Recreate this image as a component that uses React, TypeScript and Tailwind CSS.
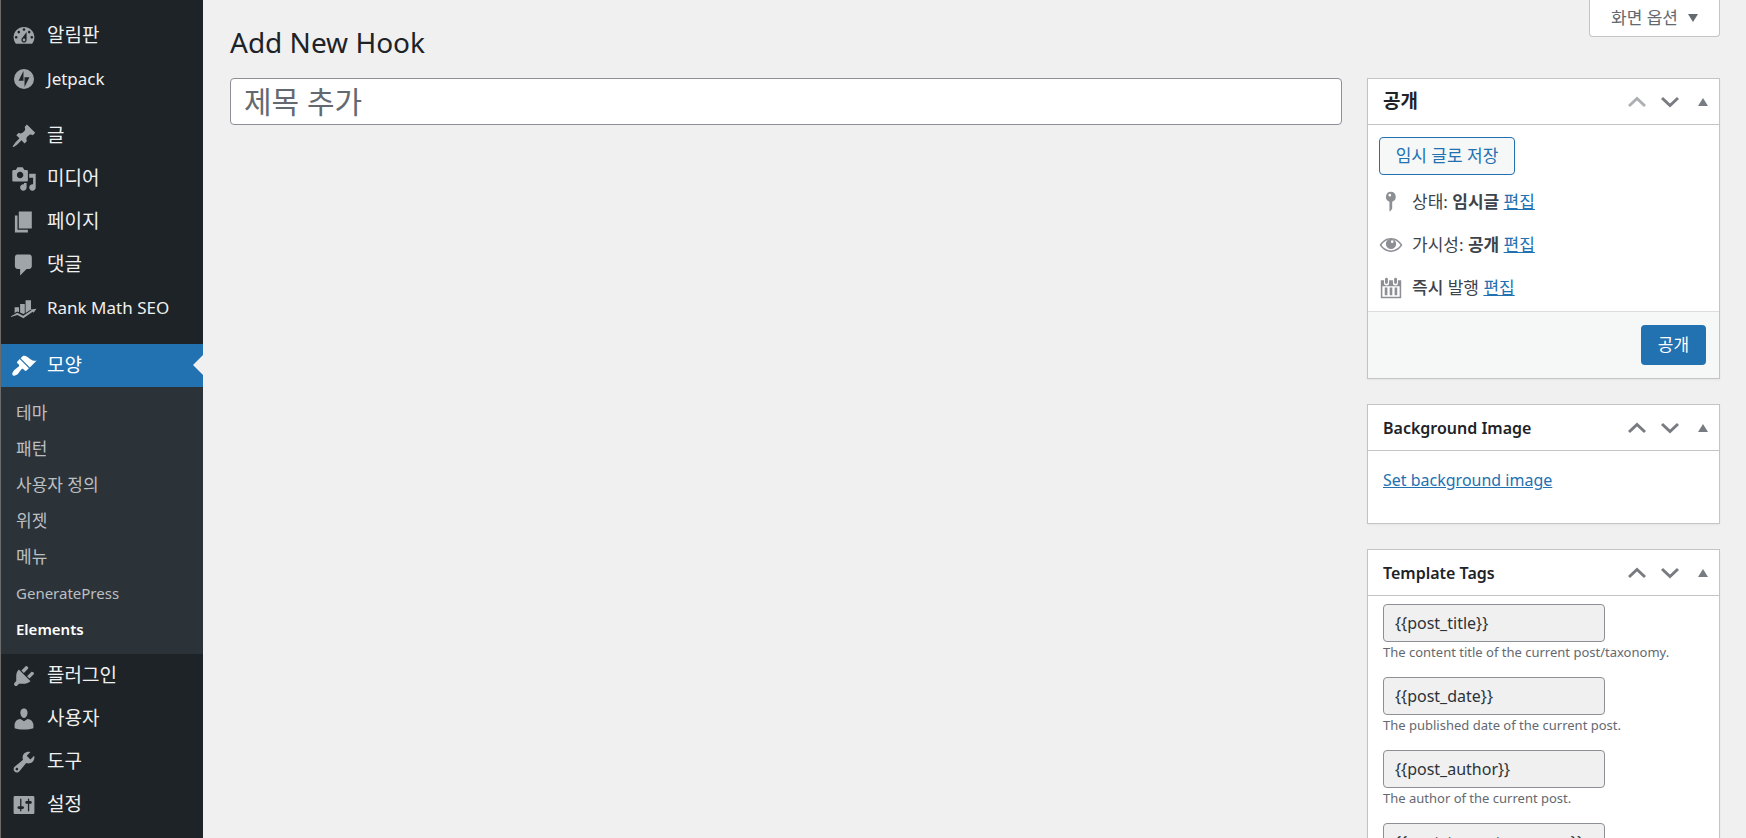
import { useState } from "react";
import type { ReactNode } from "react";
import clsx from "clsx";

const icons: Record<string, ReactNode> = {
    dashboard: <path fillRule="evenodd" d="M3.76 16h12.48c1.1-1.37 1.76-3.11 1.76-5 0-4.42-3.58-8-8-8s-8 3.58-8 8c0 1.89.66 3.63 1.76 5zM10 4c.55 0 1 .45 1 1s-.45 1-1 1-1-.45-1-1 .45-1 1-1zM6 6c.55 0 1 .45 1 1s-.45 1-1 1-1-.45-1-1 .45-1 1-1zm8 0c.55 0 1 .45 1 1s-.45 1-1 1-1-.45-1-1 .45-1 1-1zm-5.37 5.55L12 7v6c0 1.1-.9 2-2 2s-2-.9-2-2c0-.57.24-1.08.63-1.45zM4 10c.55 0 1 .45 1 1s-.45 1-1 1-1-.45-1-1 .45-1 1-1zm12 0c.55 0 1 .45 1 1s-.45 1-1 1-1-.45-1-1 .45-1 1-1zm-5 3c0-.55-.45-1-1-1s-1 .45-1 1 .45 1 1 1 1-.45 1-1z" />,
    jetpack: <path fillRule="evenodd" d="M10 2.3a7.7 7.7 0 1 0 0 15.4 7.7 7.7 0 0 0 0-15.4zM9.6 11.3H5.8l3.8-7.4v7.4zm.8 4.8V8.7h3.8l-3.8 7.4z" />,
    post: <path d="M10.44 3.02l1.82-1.82 6.36 6.35-1.83 1.82c-1.05-.68-2.48-.57-3.41.36l-.75.75c-.92.93-1.04 2.35-.35 3.41l-1.83 1.82-2.41-2.41-2.8 2.79c-.42.42-3.38 2.71-3.8 2.29s1.86-3.39 2.28-3.81l2.79-2.79L4.1 9.36l1.83-1.82c1.05.69 2.48.57 3.4-.36l.75-.75c.93-.92 1.05-2.35.36-3.41z" />,
    media: <path fillRule="evenodd" d="M13 11V4c0-.55-.45-1-1-1h-1.67L9 1H5L3.67 3H2c-.55 0-1 .45-1 1v7c0 .55.45 1 1 1h10c.55 0 1-.45 1-1zM7 4.5c1.38 0 2.5 1.12 2.5 2.5S8.38 9.5 7 9.5 4.5 8.38 4.5 7 5.62 4.5 7 4.5zM14 6h5v10.5c0 1.38-1.12 2.5-2.5 2.5S14 17.88 14 16.5s1.12-2.5 2.5-2.5c.17 0 .34.02.5.05V9h-3V6zm-4 8.05V13h2v3.5c0 1.38-1.12 2.5-2.5 2.5S7 17.88 7 16.5 8.12 14 9.5 14c.17 0 .34.02.5.05z" />,
    page: <path d="M6 15V2h10v13H6zm-1 1h8v2H3V5h2v11z" />,
    comments: <path d="M5 2h9c1.1 0 2 .9 2 2v7c0 1.1-.9 2-2 2h-2l-5 5v-5H5c-1.1 0-2-.9-2-2V4c0-1.1.9-2 2-2z" />,
    rankmath: (
        <>
            <path d="M2.8 9.5h3.4v3.8l-1.4-.6-2 1.100zM7 7h3.600v7l-1.100.6L7 13.400zM11.200 4h4.200v7.200l-4.200 2.600z" />
            <path d="M0 16.300l4.800-2.600 4.600 2.300 6.300-4.200-.8-.7 4.700-.6-2.200 3.200-.7-.9-7.200 5-4.600-2.500L0 16.900z" />
        </>
    ),
    appearance: <path d="M14.48 11.06L7.41 3.99l1.5-1.5c.5-.56 2.3-.47 3.51.32 1.21.8 1.43 1.28 2.91 2.1 1.18.64 2.45 1.26 4.45.85zm-.71.71L6.7 4.7 4.93 6.47c-.39.39-.39 1.02 0 1.41l1.06 1.06c.39.39.39 1.03 0 1.42-.6.6-1.43 1.11-2.21 1.69-.35.26-.7.53-1.01.84C1.43 14.23.4 16.08 1.4 17.07c.99 1 2.84-.03 4.18-1.36.31-.31.58-.66.85-1.02.57-.78 1.08-1.61 1.69-2.21.39-.39 1.02-.39 1.41 0l1.06 1.06c.39.39 1.02.39 1.41 0z" />,
    plugins: <path d="M13.11 4.36L9.87 7.6 8 5.73l3.24-3.24c.35-.34 1.05-.2 1.56.32.52.51.66 1.21.31 1.55zm-8 1.77l.91-1.12 9.01 9.01-1.19.84c-.71.71-2.63 1.16-3.82 1.16H6.14L4.9 17.26c-.59.59-1.54.59-2.12 0-.59-.58-.59-1.53 0-2.12l1.24-1.24v-3.88c0-1.13.4-3.19 1.09-3.89zm7.26 3.97l3.24-3.24c.34-.35 1.04-.21 1.55.31.52.51.66 1.21.31 1.55l-3.24 3.25z" />,
    users: <path d="M10 9.25c-2.27 0-2.73-3.44-2.73-3.44C7 4.02 7.82 2 9.97 2c2.16 0 2.98 2.02 2.71 3.81 0 0-.41 3.44-2.68 3.44zm0 2.57L12.72 10c2.39 0 4.52 2.33 4.52 4.53v2.49s-3.65 1.13-7.24 1.13c-3.65 0-7.24-1.13-7.24-1.13v-2.49c0-2.25 1.94-4.48 4.47-4.48z" />,
    tools: <path fillRule="evenodd" d="M16.68 9.77c-1.34 1.34-3.3 1.67-4.95.99l-5.41 6.52c-.99.99-2.59.99-3.58 0s-.99-2.59 0-3.57l6.52-5.42c-.68-1.65-.35-3.61.99-4.95 1.28-1.28 3.12-1.62 4.72-1.06l-2.89 2.89 2.82 2.82 2.86-2.87c.53 1.58.18 3.39-1.08 4.65zM3.81 16.21c.4.39 1.04.39 1.43 0 .4-.4.4-1.04 0-1.43-.39-.4-1.03-.4-1.43 0-.39.39-.39 1.03 0 1.43z" />,
    settings: <path fillRule="evenodd" d="M18 16V4c0-.55-.45-1-1-1H3c-.55 0-1 .45-1 1v12c0 .55.45 1 1 1h14c.55 0 1-.45 1-1zM8 11h1c.55 0 1 .45 1 1s-.45 1-1 1H8v1.500c0 .28-.22.5-.5.5s-.5-.22-.5-.5V13H6c-.55 0-1-.45-1-1s.45-1 1-1h1V5.500c0-.28.22-.5.5-.5s.5.22.5.5V11zm5-2h-1c-.55 0-1-.45-1-1s.45-1 1-1h1V5.500c0-.28.22-.5.5-.5s.5.22.5.5V7h1c.55 0 1 .45 1 1s-.45 1-1 1h-1v5.500c0 .28-.22.5-.5.5s-.5-.22-.5-.5V9z" />,
    key: <path fillRule="evenodd" d="M10 1.500a4.200 4.200 0 0 0-1.300 8.200V18l1.300-.9 1-1.600V9.700A4.200 4.200 0 0 0 10 1.500zM9 3.200a1.100 1.100 0 1 1 0 2.200 1.100 1.100 0 0 1 0-2.200z" />,
    visibility: (
        <>
            <path fillRule="evenodd" d="M10 4.200C5.800 4.200 2.700 6.500.5 10.100c2.200 3.500 5.300 5.700 9.500 5.700s7.300-2.200 9.500-5.700C17.300 6.500 14.200 4.200 10 4.200zm0 1.300c3.400 0 6.100 1.700 8 4.600-1.900 2.700-4.600 4.400-8 4.400s-6.100-1.700-8-4.400c1.900-2.900 4.600-4.600 8-4.600z" />
            <path fillRule="evenodd" d="M10 4.800a4.300 4.300 0 1 0 0 8.600 4.300 4.300 0 0 0 0-8.600zm1 1.300a1.100 1.100 0 1 1 0 2.200 1.100 1.100 0 0 1 0-2.200z" />
        </>
    ),
    calendar: (
        <>
            <path fillRule="evenodd" d="M1.500 3.500h2.700v2.300a2.100 2.100 0 0 0 4.200 0V3.500h3.200v2.300a2.100 2.100 0 0 0 4.200 0V3.500h2.700V18.500h-17zm1.300 5v8.700h14.400V8.500z" />
            <rect x="5" y="1.500" width="2.400" height="5.200" rx="1.200" />
            <rect x="12.600" y="1.500" width="2.400" height="5.200" rx="1.200" />
            <path d="M4.800 9.500H7v6.600H4.800zM8.900 9.500h2.200v6.600H8.900zM13 9.500h2.200v6.600H13z" />
        </>
    ),
};

function Icon({ name, className }: { name: string; className?: string }) {
    return (
        <svg viewBox="0 0 20 20" fill="currentColor" aria-hidden="true" className={clsx("shrink-0", className)}>
            {icons[name]}
        </svg>
    );
}

type MenuItem = { label: string; icon: string; latin?: boolean };

const contentMenu: MenuItem[] = [
    { label: "글", icon: "post" },
    { label: "미디어", icon: "media" },
    { label: "페이지", icon: "page" },
    { label: "댓글", icon: "comments" },
    { label: "Rank Math SEO", icon: "rankmath", latin: true },
];

const bottomMenu: MenuItem[] = [
    { label: "플러그인", icon: "plugins" },
    { label: "사용자", icon: "users" },
    { label: "도구", icon: "tools" },
    { label: "설정", icon: "settings" },
];

const submenu = [
    { label: "테마" },
    { label: "패턴" },
    { label: "사용자 정의" },
    { label: "위젯" },
    { label: "메뉴" },
    { label: "GeneratePress", latin: true },
    { label: "Elements", latin: true, current: true },
];

const templateTags = [
    { tag: "{{post_title}}", description: "The content title of the current post/taxonomy." },
    { tag: "{{post_date}}", description: "The published date of the current post." },
    { tag: "{{post_author}}", description: "The author of the current post." },
    { tag: "{{post_terms.taxonomy}}", description: "The terms of the specified taxonomy." },
];

function MenuLink({ label, icon, latin, current }: MenuItem & { current?: boolean }) {
    return (
        <li>
            <a
                href="#"
                className={clsx(
                    "relative flex items-center h-[43px] pl-[10px] gap-[10px] hover:text-[#72aee6]",
                    latin ? "text-[17px]" : "text-[19px]",
                    current ? "bg-[#2271b1] text-white" : "text-[#f0f0f1]"
                )}
            >
                <Icon name={icon} className={clsx("w-[26px] h-[26px]", current ? "text-white" : "text-[#a0a5aa]")} />
                {label}
                {current && (
                    <span className="absolute right-0 top-[11px] border-y-10 border-r-10 border-y-transparent border-r-[#f0f0f1]" />
                )}
            </a>
        </li>
    );
}

function Sidebar() {
    return (
        <nav className="w-[203px] shrink-0 bg-[#1d2327] border-l border-[#6b6b6b] pt-[14px] overflow-hidden">
            <ul>
                <MenuLink label="알림판" icon="dashboard" />
                <MenuLink label="Jetpack" icon="jetpack" latin />
            </ul>
            <ul className="mt-[14px]">
                {contentMenu.map((item) => (
                    <MenuLink key={item.label} {...item} />
                ))}
            </ul>
            <ul className="mt-[15px]">
                <MenuLink label="모양" icon="appearance" current />
                <li>
                    <ul className="bg-[#2c3338] pt-2 pb-[7px]">
                        {submenu.map((item) => (
                            <li key={item.label}>
                                <a
                                    href="#"
                                    className={clsx(
                                        "flex items-center h-9 pl-[15px] hover:text-[#72aee6]",
                                        item.latin ? "text-[15px]" : "text-[17px]",
                                        item.current ? "text-white font-semibold" : "text-[#bcbfc2]"
                                    )}
                                >
                                    {item.label}
                                </a>
                            </li>
                        ))}
                    </ul>
                </li>
                {bottomMenu.map((item) => (
                    <MenuLink key={item.label} {...item} />
                ))}
            </ul>
        </nav>
    );
}

function Chevron({ up }: { up?: boolean }) {
    return (
        <svg viewBox="0 0 18 12" fill="none" stroke="currentColor" strokeWidth="3" aria-hidden="true" className="w-[18px] h-3">
            <path d={up ? "M1 10L9 2.500l8 7.500" : "M1 2l8 7.500L17 2"} />
        </svg>
    );
}

function Postbox({ title, latin, first, children }: { title: string; latin?: boolean; first?: boolean; children: ReactNode }) {
    const [open, setOpen] = useState(true);

    return (
        <section className="bg-white border border-[#c3c4c7] shadow-xs">
            <div className="flex items-center h-[46px] pl-[15px] pr-[11px] border-b border-[#c3c4c7] text-[#787c82]">
                <h2 className={clsx("flex-1 text-[#1d2327]", latin ? "text-[16px] font-semibold" : "text-[19px] font-bold")}>{title}</h2>
                <button type="button" aria-label="위로 이동" disabled={first} className="mr-[15px] disabled:opacity-60">
                    <Chevron up />
                </button>
                <button type="button" aria-label="아래로 이동" className="mr-[19px]">
                    <Chevron />
                </button>
                <button type="button" aria-label="토글" onClick={() => setOpen(!open)}>
                    <svg viewBox="0 0 10 8" fill="currentColor" aria-hidden="true" className={clsx("w-[10px] h-2", !open && "rotate-180")}>
                        <path d="M5 0l5 8H0z" />
                    </svg>
                </button>
            </div>
            {open && children}
        </section>
    );
}

function PublishRow({ icon, children }: { icon: string; children: ReactNode }) {
    return (
        <div className="flex items-center h-[43px] gap-[9px] text-[17px] text-[#3c434a]">
            <Icon name={icon} className="w-6 h-6 text-[#8c8f94]" />
            <p>
                {children}{" "}
                <a href="#" className="text-[#2271b1] underline">편집</a>
            </p>
        </div>
    );
}

export default function App() {
    const [title, setTitle] = useState("");

    return (
        <div className="flex h-screen overflow-hidden bg-[#f0f0f1] text-[#3c434a] font-['Noto_Sans','Noto_Sans_CJK_KR',sans-serif]">
            <Sidebar />
            <main className="flex-1 min-w-0 pl-[27px] pr-[26px]">
                <header className="flex items-start justify-between h-[78px]">
                    <h1 className="pt-[22px] text-[28px] leading-10 text-[#1d2327]">Add New Hook</h1>
                    <button
                        type="button"
                        className="flex items-center justify-center gap-[10px] w-[131px] h-[37px] bg-white border border-t-0 border-[#c3c4c7] rounded-b text-[17px] text-[#646970]"
                    >
                        화면 옵션
                        <svg viewBox="0 0 10 8" fill="currentColor" aria-hidden="true" className="w-[10px] h-2">
                            <path d="M0 0h10L5 8z" />
                        </svg>
                    </button>
                </header>

                <div className="flex items-start gap-[25px]">
                    <input
                        type="text"
                        aria-label="제목 추가"
                        placeholder="제목 추가"
                        value={title}
                        onChange={(e) => setTitle(e.target.value)}
                        className="flex-1 min-w-0 h-[47px] px-[13px] bg-white border border-[#8c8f94] rounded text-[30px] placeholder:text-[#646970]"
                    />

                    <aside className="w-[353px] shrink-0 space-y-[25px]">
                        <Postbox title="공개" first>
                            <div className="pt-3 px-[11px] pb-[2px]">
                                <button
                                    type="button"
                                    className="block w-[136px] h-[38px] mb-[5px] bg-[#f6f7f7] border border-[#2271b1] rounded text-[17px] text-[#2271b1]"
                                >
                                    임시 글로 저장
                                </button>
                                <PublishRow icon="key">
                                    상태: <span className="font-semibold">임시글</span>
                                </PublishRow>
                                <PublishRow icon="visibility">
                                    가시성: <span className="font-semibold">공개</span>
                                </PublishRow>
                                <PublishRow icon="calendar">
                                    <span className="font-medium">즉시</span> 발행
                                </PublishRow>
                            </div>
                            <div className="flex justify-end py-[13px] px-[13px] bg-[#f6f7f7] border-t border-[#dcdcde]">
                                <button type="button" className="w-[65px] h-10 bg-[#2271b1] rounded text-[17px] text-white">
                                    공개
                                </button>
                            </div>
                        </Postbox>

                        <Postbox title="Background Image" latin>
                            <p className="h-[72px] pt-[17px] pl-[15px] text-[16px] leading-6">
                                <a href="#" className="text-[#2271b1] underline">Set background image</a>
                            </p>
                        </Postbox>

                        <Postbox title="Template Tags" latin>
                            <ul className="pt-2 px-[15px]">
                                {templateTags.map(({ tag, description }) => (
                                    <li key={tag} className="h-[73px]">
                                        <input
                                            type="text"
                                            readOnly
                                            value={tag}
                                            aria-label={description}
                                            className="block w-[222px] h-[38px] px-[11px] bg-[#f0f0f1] border border-[#8c8f94] rounded text-[16px] text-[#2c3338]"
                                        />
                                        <p className="text-[13px] leading-5 text-[#646970]">{description}</p>
                                    </li>
                                ))}
                            </ul>
                        </Postbox>
                    </aside>
                </div>
            </main>
        </div>
    );
}
